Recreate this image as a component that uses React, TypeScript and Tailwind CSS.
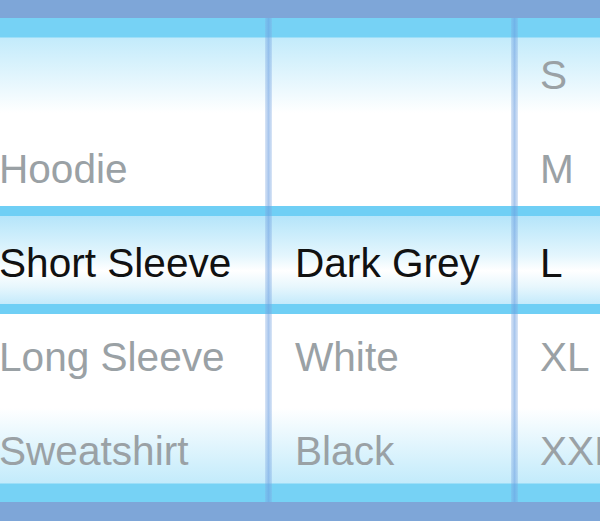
import React from "react";

const cols = [
  { w: "w-[266px]", pl: "pl-0 -ml-[1px]", items: ["", "Hoodie", "Short Sleeve", "Long Sleeve", "Sweatshirt"] },
  { w: "w-[239px]", pl: "pl-[23px]", items: ["", "", "Dark Grey", "White", "Black"] },
  { w: "flex-1", pl: "pl-[22px]", items: ["S", "M", "L", "XL", "XXL"] },
];

function Divider() {
  return (
    <div className="w-[7px] shrink-0 self-stretch bg-[linear-gradient(to_right,rgba(130,170,225,0.3),rgba(110,160,225,0.6),rgba(130,170,225,0.3))] z-20" />
  );
}

export default function App() {
  return (
    <div
      className="w-[600px] h-[521px] overflow-hidden flex flex-col bg-white"
      style={{ fontFamily: '"Liberation Sans", Arial, sans-serif' }}
    >
      <div className="h-[18px] shrink-0 bg-[#7ea6d8]" />
      <div className="relative h-[484px] shrink-0 bg-[linear-gradient(to_bottom,#76d2f5_0px,#76d2f5_19px,#c3ebfb_20px,#ffffff_95px,#ffffff_390px,#c3ebfb_465px,#76d2f5_466px,#76d2f5_484px)]">
        {/* selection band */}
        <div className="absolute left-0 right-0 top-[188px] h-[108px] flex flex-col z-10">
          <div className="h-[10px] bg-[#6fcff5]" />
          <div className="flex-1 bg-[linear-gradient(to_bottom,#b5e5fa_0%,#e4f6fd_45%,#ffffff_62%,#e8f7fd_80%,#c4eafb_100%)]" />
          <div className="h-[10px] bg-[#6fcff5]" />
        </div>
        <div className="relative flex h-full">
          {cols.map((c, ci) => (
            <React.Fragment key={ci}>
              {ci > 0 && <Divider />}
              <div className={`${c.w} ${c.pl} shrink-0 flex flex-col pt-[10px] relative z-30`}>
                {c.items.map((t, i) => (
                  <div
                    key={i}
                    className={`h-[94px] flex items-center text-[40.6px] leading-none whitespace-nowrap ${
                      i === 2 ? "text-[#111111]" : "text-[#9aa1a5]"
                    }`}
                  >
                    {t}
                  </div>
                ))}
              </div>
            </React.Fragment>
          ))}
        </div>
      </div>
      <div className="h-[19px] shrink-0 bg-[#7ea6d8]" />
    </div>
  );
}
